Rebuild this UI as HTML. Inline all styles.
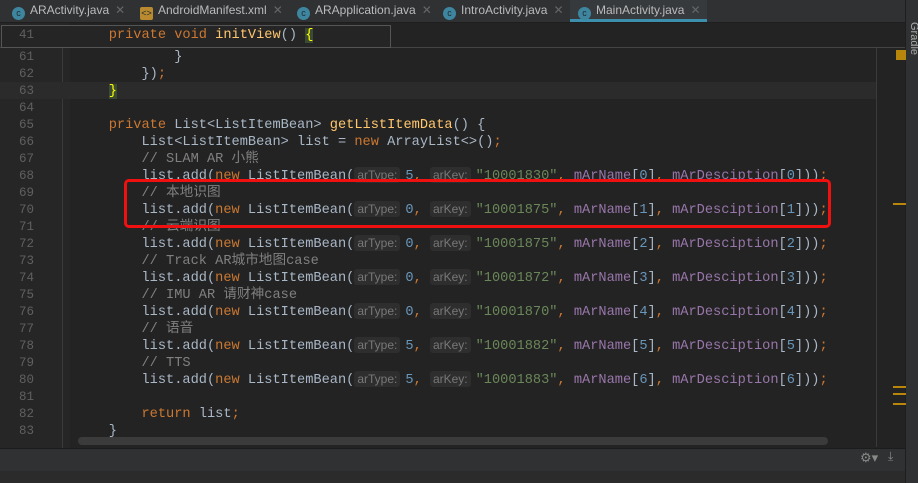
<!DOCTYPE html>
<html><head><meta charset="utf-8"><style>
body{margin:0;width:918px;height:483px;overflow:hidden;background:#232323;font-family:"Liberation Mono","Noto Sans CJK SC",monospace;position:relative}
.tabs{position:absolute;left:0;top:0;width:905px;height:22px;background:#2f3133;border-bottom:1px solid #1e1e1e}
.tab{position:absolute;top:0;height:22px;font:12px "Liberation Sans",sans-serif;color:#bbb;line-height:21px}
.ic{display:inline-block;width:13px;height:13px;border-radius:50%;background:#3e86a0;color:#1d2a30;font-size:9px;line-height:13px;text-align:center;vertical-align:-2px;margin-right:5px}
.x{color:#666;margin-left:6px}
.gut{position:absolute;left:0;top:23px;width:70px;height:425px;background:#262626}
.ln{position:absolute;left:0;width:34px;text-align:right;color:#5f6060;font-size:12.5px;line-height:17px}
.cl{position:absolute;left:76px;white-space:pre;font-size:13.65px;line-height:17px;color:#a9b7c6}
.k{color:#cc7832}.s{color:#6a8759}.n{color:#6897bb}.f{color:#9876aa}.c{color:#808080}.m{color:#ffc66d}
.h{font:12px "Liberation Sans",sans-serif;color:#787878;background:#2e2e2e;border-radius:3px;padding:1px 3px;margin-right:5px}
</style></head><body>
<div class="tabs">
<div class="tab" style="left:12px"><span class="ic">c</span>ARActivity.java<span class="x">✕</span></div>
<div class="tab" style="left:140px"><span class="ic" style="background:#b98a2f;border-radius:2px">&lt;&gt;</span>AndroidManifest.xml<span class="x">✕</span></div>
<div class="tab" style="left:297px"><span class="ic">c</span>ARApplication.java<span class="x">✕</span></div>
<div class="tab" style="left:443px"><span class="ic">c</span>IntroActivity.java<span class="x">✕</span></div>
<div class="tab" style="left:570px;width:137px;background:#363a3d;padding-left:8px;box-sizing:border-box;border-bottom:3px solid #3d8fae"><span class="ic">c</span>MainActivity.java<span class="x">✕</span></div>
</div>
<div style="position:absolute;left:905px;top:0;width:13px;height:483px;background:#2f3133;border-left:1px solid #1e1e1e"></div>
<div style="position:absolute;top:22px;font:11px 'Liberation Sans';color:#aaa;transform:rotate(90deg);transform-origin:0 0;left:920px">Gradle</div>
<div class="gut"></div>
<div style="position:absolute;left:62px;top:30px;width:1px;height:418px;background:#3a3a3a"></div>
<div style="position:absolute;left:876px;top:47px;width:1px;height:400px;background:#3a3a3a"></div>
<div style="position:absolute;left:0;top:82px;width:876px;height:17px;background:#2b2b2b"></div>
<div style="position:absolute;left:0;top:47px;width:905px;height:1px;background:#444"></div>
<div style="position:absolute;left:1px;top:25px;width:388px;height:21px;border:1px solid #555;background:#252525"></div>
<div class="ln" style="top:27px">41</div>
<div class="cl" style="top:27px"><span>    </span><span class="k">private void </span><span class="m">initView</span>() <span style="color:#ff0;background:#3b4a32">{</span></div>
<div class="ln" style="top:49px">61</div><div class="cl" style="top:49px">            }</div>
<div class="ln" style="top:66px">62</div><div class="cl" style="top:66px">        })<span class="k">;</span></div>
<div class="ln" style="top:83px">63</div><div class="cl" style="top:83px">    <span style="color:#ff0;background:#3b4a32">}</span></div>
<div class="ln" style="top:100px">64</div>
<div class="ln" style="top:117px">65</div><div class="cl" style="top:117px">    <span class="k">private </span>List&lt;ListItemBean&gt; <span class="m">getListItemData</span>() {</div>
<div class="ln" style="top:134px">66</div><div class="cl" style="top:134px">        List&lt;ListItemBean&gt; list = <span class="k">new </span>ArrayList&lt;&gt;()<span class="k">;</span></div>
<div class="ln" style="top:151px">67</div><div class="cl c" style="top:151px">        // SLAM AR 小熊</div>
<div class="ln" style="top:168px">68</div><div class="cl" style="top:168px">        list.add(<span class="k">new </span>ListItemBean(<span class="h">arType:</span><span class="n">5</span><span class="k">, </span><span class="h">arKey:</span><span class="s">"10001830"</span><span class="k">, </span><span class="f">mArName</span>[<span class="n">0</span>]<span class="k">, </span><span class="f">mArDesciption</span>[<span class="n">0</span>]))<span class="k">;</span></div>
<div class="ln" style="top:185px">69</div><div class="cl c" style="top:185px">        // 本地识图</div>
<div class="ln" style="top:202px">70</div><div class="cl" style="top:202px">        list.add(<span class="k">new </span>ListItemBean(<span class="h">arType:</span><span class="n">0</span><span class="k">, </span><span class="h">arKey:</span><span class="s">"10001875"</span><span class="k">, </span><span class="f">mArName</span>[<span class="n">1</span>]<span class="k">, </span><span class="f">mArDesciption</span>[<span class="n">1</span>]))<span class="k">;</span></div>
<div class="ln" style="top:219px">71</div><div class="cl c" style="top:219px">        // 云端识图</div>
<div class="ln" style="top:236px">72</div><div class="cl" style="top:236px">        list.add(<span class="k">new </span>ListItemBean(<span class="h">arType:</span><span class="n">0</span><span class="k">, </span><span class="h">arKey:</span><span class="s">"10001875"</span><span class="k">, </span><span class="f">mArName</span>[<span class="n">2</span>]<span class="k">, </span><span class="f">mArDesciption</span>[<span class="n">2</span>]))<span class="k">;</span></div>
<div class="ln" style="top:253px">73</div><div class="cl c" style="top:253px">        // Track AR城市地图case</div>
<div class="ln" style="top:270px">74</div><div class="cl" style="top:270px">        list.add(<span class="k">new </span>ListItemBean(<span class="h">arType:</span><span class="n">0</span><span class="k">, </span><span class="h">arKey:</span><span class="s">"10001872"</span><span class="k">, </span><span class="f">mArName</span>[<span class="n">3</span>]<span class="k">, </span><span class="f">mArDesciption</span>[<span class="n">3</span>]))<span class="k">;</span></div>
<div class="ln" style="top:287px">75</div><div class="cl c" style="top:287px">        // IMU AR 请财神case</div>
<div class="ln" style="top:304px">76</div><div class="cl" style="top:304px">        list.add(<span class="k">new </span>ListItemBean(<span class="h">arType:</span><span class="n">0</span><span class="k">, </span><span class="h">arKey:</span><span class="s">"10001870"</span><span class="k">, </span><span class="f">mArName</span>[<span class="n">4</span>]<span class="k">, </span><span class="f">mArDesciption</span>[<span class="n">4</span>]))<span class="k">;</span></div>
<div class="ln" style="top:321px">77</div><div class="cl c" style="top:321px">        // 语音</div>
<div class="ln" style="top:338px">78</div><div class="cl" style="top:338px">        list.add(<span class="k">new </span>ListItemBean(<span class="h">arType:</span><span class="n">5</span><span class="k">, </span><span class="h">arKey:</span><span class="s">"10001882"</span><span class="k">, </span><span class="f">mArName</span>[<span class="n">5</span>]<span class="k">, </span><span class="f">mArDesciption</span>[<span class="n">5</span>]))<span class="k">;</span></div>
<div class="ln" style="top:355px">79</div><div class="cl c" style="top:355px">        // TTS</div>
<div class="ln" style="top:372px">80</div><div class="cl" style="top:372px">        list.add(<span class="k">new </span>ListItemBean(<span class="h">arType:</span><span class="n">5</span><span class="k">, </span><span class="h">arKey:</span><span class="s">"10001883"</span><span class="k">, </span><span class="f">mArName</span>[<span class="n">6</span>]<span class="k">, </span><span class="f">mArDesciption</span>[<span class="n">6</span>]))<span class="k">;</span></div>
<div class="ln" style="top:389px">81</div>
<div class="ln" style="top:406px">82</div><div class="cl" style="top:406px">        <span class="k">return </span>list<span class="k">;</span></div>
<div class="ln" style="top:423px">83</div><div class="cl" style="top:423px">    }</div>
<div style="position:absolute;left:78px;top:437px;height:8px;border-radius:4px;background:#3b3b3b;width:750px"></div>
<div style="position:absolute;left:124px;top:179px;width:701px;height:43px;border:3px solid #f01010;border-radius:5px"></div>
<div style="position:absolute;left:896px;top:50px;width:10px;height:10px;background:#b8860b"></div>
<div style="position:absolute;left:893px;top:203px;width:13px;height:2px;background:#b8860b"></div>
<div style="position:absolute;left:893px;top:386px;width:13px;height:2px;background:#b8860b"></div>
<div style="position:absolute;left:893px;top:393px;width:13px;height:2px;background:#b8860b"></div>
<div style="position:absolute;left:893px;top:403px;width:13px;height:2px;background:#b8860b"></div>
<div style="position:absolute;left:0;top:448px;width:905px;height:22px;background:#2f3133;border-top:1px solid #1c1c1c;border-bottom:1px solid #1c1c1c"></div>
<div style="position:absolute;left:860px;top:451px;color:#888;font-size:13px">⚙▾</div>
<div style="position:absolute;left:888px;top:450px;color:#888;font-size:12px">⤓</div>
<div style="position:absolute;left:0;top:471px;width:905px;height:12px;background:#2b2b2b"></div>
</body></html>
